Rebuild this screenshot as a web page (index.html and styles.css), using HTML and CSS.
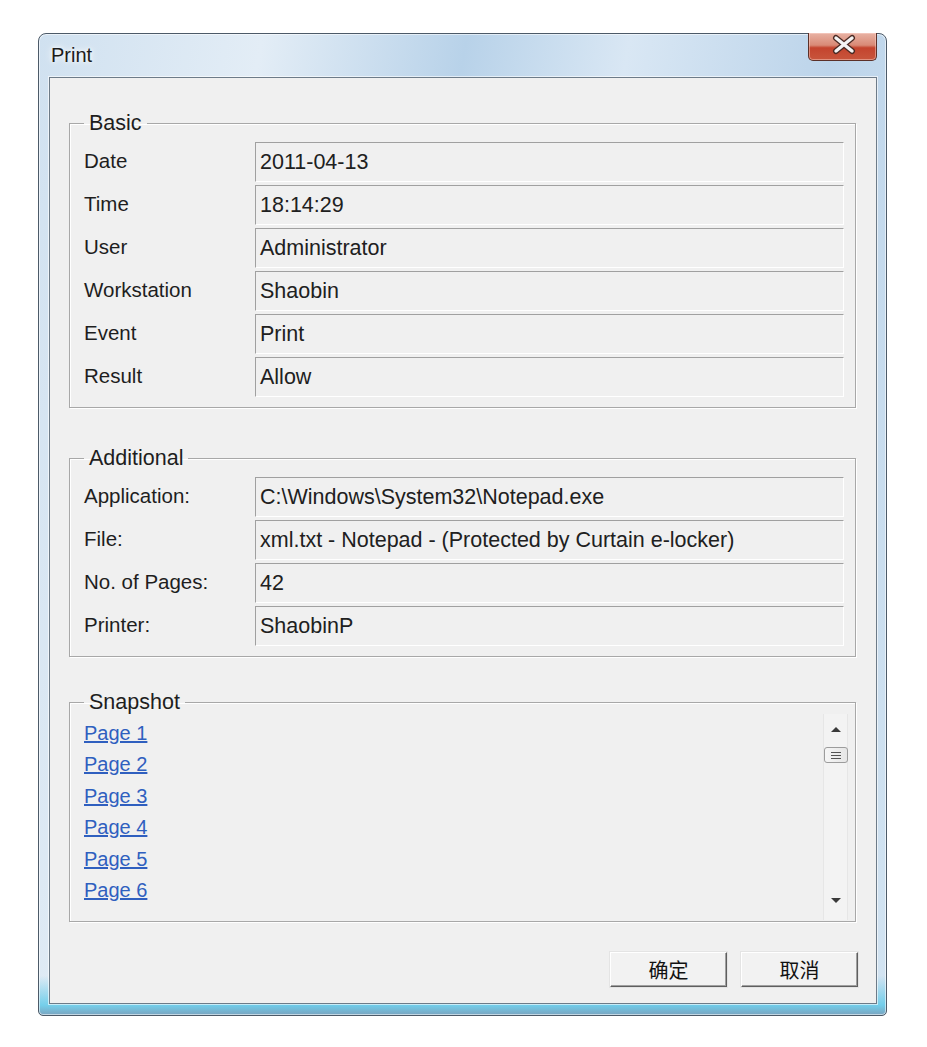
FILE: index.html
```html
<!DOCTYPE html>
<html lang="en">
<head>
    <meta charset="UTF-8">
    <meta name="viewport" content="width=device-width, initial-scale=1.0">
    <title>Print</title>
    <link rel="stylesheet" href="styles.css">
</head>
<body>

    <div class="window">
        <div class="titlebar">
            <span class="title">Print</span>
            <button class="close" aria-label="Close">
                <svg width="69" height="28" viewBox="0 0 69 28">
                    <path d="M28 6 L44 19 M44 6 L28 19" stroke="#4a2a24" stroke-width="6" stroke-linecap="round"/>
                    <path d="M28 6 L44 19 M44 6 L28 19" stroke="#f4f4f4" stroke-width="3.4" stroke-linecap="round"/>
                </svg>
            </button>
        </div>

        <div class="client">
            <fieldset class="group">
                <legend>Basic</legend>
                <div class="rows">
                    <span class="label">Date</span><div class="field">2011-04-13</div>
                    <span class="label">Time</span><div class="field">18:14:29</div>
                    <span class="label">User</span><div class="field">Administrator</div>
                    <span class="label">Workstation</span><div class="field">Shaobin</div>
                    <span class="label">Event</span><div class="field">Print</div>
                    <span class="label">Result</span><div class="field">Allow</div>
                </div>
            </fieldset>

            <fieldset class="group additional">
                <legend>Additional</legend>
                <div class="rows">
                    <span class="label">Application:</span><div class="field">C:\Windows\System32\Notepad.exe</div>
                    <span class="label">File:</span><div class="field">xml.txt - Notepad - (Protected by Curtain e-locker)</div>
                    <span class="label">No. of Pages:</span><div class="field">42</div>
                    <span class="label">Printer:</span><div class="field">ShaobinP</div>
                </div>
            </fieldset>

            <fieldset class="group snapshot">
                <legend>Snapshot</legend>
                <div class="list">
                    <ul class="pages">
                        <li><a href="#">Page 1</a></li>
                        <li><a href="#">Page 2</a></li>
                        <li><a href="#">Page 3</a></li>
                        <li><a href="#">Page 4</a></li>
                        <li><a href="#">Page 5</a></li>
                        <li><a href="#">Page 6</a></li>
                    </ul>
                    <div class="scrollbar">
                        <div class="arrow-btn"><span class="arrow up"></span></div>
                        <div class="thumb"><span></span><span></span><span></span></div>
                        <div class="track"></div>
                        <div class="arrow-btn down-btn"><span class="arrow down"></span></div>
                    </div>
                </div>
            </fieldset>

            <div class="buttons">
                <button class="btn">确定</button>
                <button class="btn">取消</button>
            </div>
        </div>
    </div>

</body>
</html>
```

FILE: styles.css
```css
body {
  margin: 0;
  background-color: #ffffff;
  font-family: "Liberation Sans", Arial, "Noto Sans CJK SC", sans-serif;
  color: #1e1e1e;
}
.window {
  box-sizing: border-box;
  width: 849px;
  height: 983px;
  margin: 33px 0 0 38px;
  padding: 0 9px 11px 10px;
  display: flex;
  flex-direction: column;
  border: 1px solid #4c5a68;
  border-radius: 8px 8px 5px 5px;
  background:
    linear-gradient(180deg, rgba(255,255,255,0) 96%, rgba(90,200,232,.8) 99%, #7aa4c0 100%),
    linear-gradient(100deg, #d0e1f0 0%, #e3edf6 22%, #b8d2e9 42%, #d9e7f4 58%, #bcd4ea 78%, #d3e4f2 100%);
  box-shadow: inset 0 0 0 1px rgba(255,255,255,.55);
}
.titlebar {
  height: 43px;
  display: flex;
  align-items: flex-start;
}
.title {
  margin: 9px 0 0 2px;
  font-size: 20px;
  line-height: 24px;
  color: #1b1b1b;
  text-shadow: 0 0 8px #ffffff, 0 0 4px #ffffff;
}
.close {
  margin: -1px 0 0 auto;
  width: 69px;
  height: 28px;
  padding: 0;
  border: 1px solid #5b3028;
  border-top: none;
  border-radius: 0 0 5px 5px;
  background: linear-gradient(180deg, #e8b2a4 0%, #d98a76 45%, #c4442e 55%, #c8553c 100%);
  box-shadow: inset 0 0 0 1px rgba(255,220,210,.45);
}
.close svg {
  display: block;
  margin: -1px 0 0 -1px;
}
.client {
  flex: 1;
  border: 1px solid #6d7b88;
  background-color: #f0f0f0;
  box-shadow: 0 0 0 1px rgba(255,255,255,.6);
}

/* group boxes */
.group {
  margin: 33px 20px 0 19px;
  padding: 0 11px 10px 14px;
  border: 1px solid #a8a8a8;
  box-shadow: inset 1px 1px 0 #ffffff, 1px 1px 0 #ffffff;
  min-width: 0;
}
.group legend {
  padding: 0 5px;
  margin-left: 0;
  font-size: 21.5px;
  line-height: 24px;
  color: #1e1e1e;
}
.additional {
  margin-top: 38px;
}
.rows {
  display: grid;
  grid-template-columns: 171px 1fr;
  grid-auto-rows: 40px;
  row-gap: 3px;
  padding-top: 7px;
}
.label {
  font-size: 20.5px;
  align-self: center;
  margin-top: -3px;
}
.field {
  box-sizing: border-box;
  display: flex;
  align-items: center;
  padding: 0 4px;
  font-size: 21.5px;
  color: #202020;
  border-top: 1px solid #a0a0a0;
  border-left: 1px solid #a0a0a0;
  border-bottom: 1px solid #ffffff;
  border-right: 1px solid #ffffff;
  white-space: nowrap;
}

/* snapshot list */
.snapshot {
  margin-top: 33px;
  padding: 0 7px 1px 14px;
}
.list {
  height: 206px;
  display: grid;
  grid-template-columns: 1fr 25px;
}
.pages {
  list-style-type: none;
  margin: 0;
  padding: 4px 0 0 0;
}
.pages li {
  font-size: 20px;
  line-height: 31.4px;
}
.pages a {
  color: #2f5fbf;
  text-decoration: underline;
}
.scrollbar {
  display: flex;
  flex-direction: column;
  align-items: center;
  background-color: #f3f3f3;
  border-left: 1px solid #e6e6e6;
  border-right: 1px solid #e6e6e6;
}
.arrow-btn {
  height: 30px;
  width: 100%;
  display: flex;
  align-items: center;
  justify-content: center;
}
.down-btn {
  height: 40px;
}
.arrow {
  width: 0;
  height: 0;
  border-left: 5px solid transparent;
  border-right: 5px solid transparent;
}
.arrow.up {
  border-bottom: 5px solid #3a3a3a;
}
.arrow.down {
  border-top: 5px solid #3a3a3a;
}
.thumb {
  box-sizing: border-box;
  margin-top: 3px;
  width: 24px;
  height: 16px;
  border: 1px solid #9c9c9c;
  border-radius: 3px;
  background: linear-gradient(90deg, #f6f6f6, #e6e6e6);
  display: flex;
  flex-direction: column;
  align-items: center;
  justify-content: center;
  gap: 2px;
}
.thumb span {
  display: block;
  width: 10px;
  height: 1px;
  background-color: #555555;
}
.track {
  flex: 1;
}

/* dialog buttons */
.buttons {
  display: flex;
  justify-content: flex-end;
  gap: 14px;
  margin-top: 30px;
  padding-right: 18px;
}
.btn {
  box-sizing: border-box;
  width: 117px;
  height: 35px;
  padding: 0;
  font-family: "Noto Sans CJK SC", sans-serif;
  font-size: 20px;
  color: #111111;
  background-color: #f2f2f2;
  border-top: 1px solid #ffffff;
  border-left: 1px solid #ffffff;
  border-right: 1px solid #5f5f5f;
  border-bottom: 1px solid #5f5f5f;
  box-shadow: inset -1px -1px 0 #a0a0a0, 0 0 0 1px #e4e4e4;
}
```
